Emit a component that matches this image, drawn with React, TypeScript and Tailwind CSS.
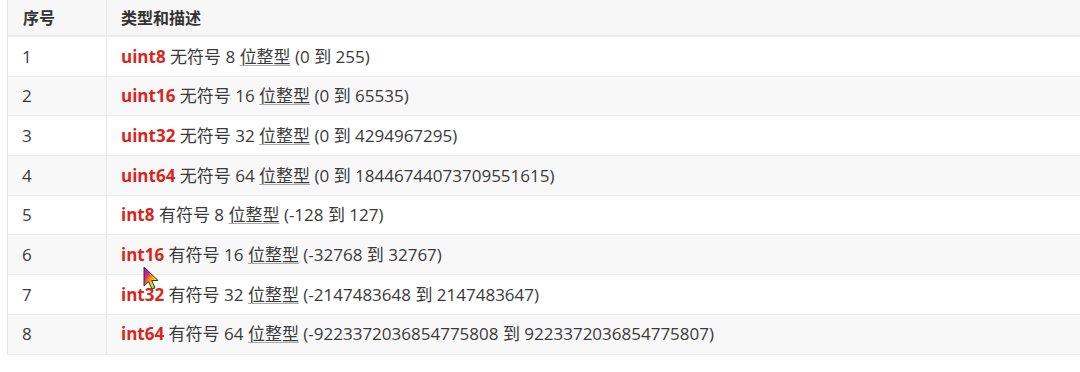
import React from 'react';

const rows = [
  { n: '1', t: 'uint8', pre: '无符号 8 ', range: '(0 到 255)' },
  { n: '2', t: 'uint16', pre: '无符号 16 ', range: '(0 到 65535)' },
  { n: '3', t: 'uint32', pre: '无符号 32 ', range: '(0 到 4294967295)' },
  { n: '4', t: 'uint64', pre: '无符号 64 ', range: '(0 到 18446744073709551615)' },
  { n: '5', t: 'int8', pre: '有符号 8 ', range: '(-128 到 127)' },
  { n: '6', t: 'int16', pre: '有符号 16 ', range: '(-32768 到 32767)' },
  { n: '7', t: 'int32', pre: '有符号 32 ', range: '(-2147483648 到 2147483647)' },
  { n: '8', t: 'int64', pre: '有符号 64 ', range: '(-9223372036854775808 到 9223372036854775807)' },
];

const Cursor: React.FC = () => (
  <svg className="absolute left-[143px] top-[266px] z-10" width="18" height="25" viewBox="0 0 18 25">
    <defs>
      <linearGradient id="rb" x1="0" y1="0" x2="1" y2="1">
        <stop offset="0" stopColor="#7a1fd6" />
        <stop offset="0.3" stopColor="#e0208a" />
        <stop offset="0.5" stopColor="#f5a000" />
        <stop offset="0.7" stopColor="#f5e400" />
        <stop offset="1" stopColor="#20b040" />
      </linearGradient>
    </defs>
    <path d="M1 1 L1 20 L5.5 15.5 L9 23 L12 21.8 L8.7 14.5 L15 14.5 Z" fill="url(#rb)" stroke="#333" strokeWidth="1" strokeLinejoin="round" />
  </svg>
);

export default function App() {
  return (
    <div className="relative w-[1080px] h-[372px] bg-white overflow-hidden text-[17px] text-[#3a3a3a] font-['Open_Sans','Noto_Sans_CJK_SC',sans-serif]">
      <Cursor />
      <div className="ml-[7px] w-[1090px] border-l border-[#e6e6e6]">
        <div className="flex h-[37px] bg-[#f7f7f7] border-b-2 border-[#ececec] font-bold text-[16px] text-[#333]">
          <div className="w-[99px] pl-[15px] flex items-center border-r border-[#e6e6e6]">序号</div>
          <div className="flex-1 pl-[14px] flex items-center">类型和描述</div>
        </div>
        {rows.map((r, i) => (
          <div
            key={r.n}
            className={`flex h-[39.7px] border-b border-[#ebebeb] ${i % 2 === 1 ? 'bg-[#f8f8f8]' : 'bg-white'}`}
          >
            <div className="w-[99px] pl-[14px] flex items-center border-r border-[#e6e6e6]">{r.n}</div>
            <div className="flex-1 pl-[14px] flex items-center whitespace-pre">
              <span className="font-bold text-[#d9251c]">{r.t}</span>
              <span> {r.pre}</span>
              <span className="underline decoration-[#aaa] decoration-1 underline-offset-2">位整型</span>
              <span> {r.range}</span>
            </div>
          </div>
        ))}
      </div>
    </div>
  );
}
